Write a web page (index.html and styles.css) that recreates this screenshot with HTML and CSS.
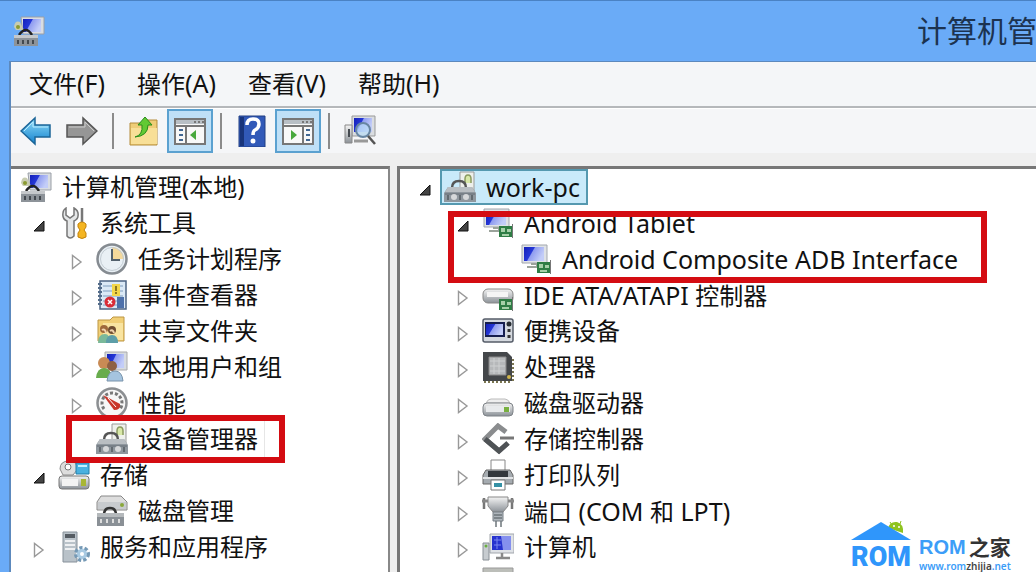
FILE: index.html
```html
<!DOCTYPE html>
<html lang="zh-CN">

<head>
    <meta charset="UTF-8">
    <meta name="viewport" content="width=device-width, initial-scale=1.0">
    <title>计算机管理</title>
    <link rel="stylesheet" href="styles.css">
</head>

<body>
    <!-- icons shared by several rows -->
    <svg class="defs" aria-hidden="true">
        <defs>
            <linearGradient id="screen" x1="0" y1="0" x2="1" y2="0.4">
                <stop offset="0" stop-color="#1420b8" />
                <stop offset="0.45" stop-color="#2638d8" />
                <stop offset="0.5" stop-color="#8f9cf0" />
                <stop offset="1" stop-color="#c3cdf8" />
            </linearGradient>
            <linearGradient id="metal" x1="0" y1="0" x2="0" y2="1">
                <stop offset="0" stop-color="#f4f4f4" />
                <stop offset="1" stop-color="#8c9298" />
            </linearGradient>
            <linearGradient id="blue" x1="0" y1="0" x2="0" y2="1">
                <stop offset="0" stop-color="#8fdcf8" />
                <stop offset="1" stop-color="#1583cf" />
            </linearGradient>
            <symbol id="open" viewBox="0 0 12 12">
                <path d="M11 1v10H1z" fill="#444" stroke="#111" />
            </symbol>
            <symbol id="closed" viewBox="0 0 12 16">
                <path d="M1.500 1.500v13L10 8z" fill="#fff" stroke="#999" stroke-width="1.400" />
            </symbol>
            <symbol id="manage" viewBox="0 0 32 32">
                <path d="M8 2h23v17H10z" fill="#d9dde2" stroke="#9a9fa6" />
                <path d="M10 4h18v13H10z" fill="url(#screen)" />
                <path d="M1 12q1-7 6-5l4 8H3z" fill="#c8ccb0" />
                <circle cx="5" cy="12" r="2" fill="#8a9a30" />
                <path d="M6 20q7-10 13 0" fill="none" stroke="#222" stroke-width="2.500" />
                <path d="M1 20h24v11H1z" fill="#8d9399" />
                <path d="M1 20h24v3H1z" fill="#c5c8cb" />
                <path d="M5 25v4M10 25v4M15 25v4M20 25v4" stroke="#444a50" stroke-width="2" />
            </symbol>
            <symbol id="toolbox" viewBox="0 0 32 32">
                <path d="M16 1h14v19H16z" fill="#eef0ec" stroke="#999" />
                <path d="M21 12V8q0-4 3-4t3 4v4" fill="#d8e8a8" stroke="#8a9a60" stroke-width="1.500" />
                <path d="M8 17q0-7 7-7t7 7" fill="none" stroke="#555" stroke-width="2.500" />
                <path d="M4 16h24l4 6v9H0v-9z" fill="#8f979e" />
                <path d="M4 16h24l3 5H1z" fill="#b9bec2" />
                <path d="M1 23h30" stroke="#606970" />
                <circle cx="10" cy="26" r="3" fill="#d6d8da" />
                <circle cx="22" cy="26" r="3" fill="#d6d8da" />
                <path d="M4 24v5M16 24v5M28 24v5" stroke="#626a70" stroke-width="2" />
            </symbol>
            <symbol id="adapter" viewBox="0 0 32 32">
                <path d="M2 2h25v18H2z" fill="#dfe2e6" stroke="#a2a7ad" />
                <path d="M4 4h20v14H4z" fill="url(#screen)" />
                <path d="M11 21h6v3H7" fill="none" stroke="#9ba39b" stroke-width="2" />
                <path d="M17 19h13v11H17z" fill="#2f7d45" />
                <path d="M19 21h4v4h-4zM25 22h4v3h-4zM20 27h7v2h-7z" fill="#a6d0a8" />
                <path d="M30.500 17v14" stroke="#777" />
            </symbol>
            <symbol id="drive" viewBox="0 0 32 32">
                <path d="M4 16q2-4 5-4h14q3 0 5 4z" fill="#eee" stroke="#bbb" />
                <rect x="1" y="16" width="30" height="13" rx="4" fill="url(#metal)" stroke="#7e8388" />
                <path d="M4 19h24v6H4z" fill="#e8eaec" />
                <path d="M22 20h5v5h-5z" fill="#78b040" />
            </symbol>
        </defs>
    </svg>

    <header class="titlebar">
        <svg class="app-icon" viewBox="0 0 32 32"><use href="#manage" /></svg>
        <h1>计算机管</h1>
    </header>

    <div class="window">
        <nav class="menubar">
            <button type="button">文件<span class="latin">(F)</span></button>
            <button type="button">操作<span class="latin">(A)</span></button>
            <button type="button">查看<span class="latin">(V)</span></button>
            <button type="button">帮助<span class="latin">(H)</span></button>
        </nav>

        <div class="toolbar">
            <button type="button" aria-label="后退">
                <svg class="icon" viewBox="0 0 32 32"><path d="M1 16L15 3v7h15v12H15v7z" fill="url(#blue)" stroke="#1b6598" stroke-width="1.500" /><path d="M4 16l9-9v5h15" fill="none" stroke="#b9ecff" /></svg>
            </button>
            <button type="button" aria-label="前进">
                <svg class="icon" viewBox="0 0 32 32"><path d="M31 16L17 3v7H1v12h16v7z" fill="#969696" stroke="#555" stroke-width="1.500" /><path d="M3 12h16V7l9 9" fill="none" stroke="#ccc" /></svg>
            </button>
            <span class="separator"></span>
            <button type="button" aria-label="上一级">
                <svg class="icon" viewBox="0 0 32 32"><path d="M2 8h12l3-3h12v25H2z" fill="#efcd77" stroke="#b48d3c" /><path d="M3 13h26v16H3z" fill="#f8df97" /><path d="M7 22q8-2 7-12h-4l7-8 7 8h-4q0 11-13 12z" fill="#62c934" stroke="#288c1c" /></svg>
            </button>
            <button type="button" class="pressed" aria-label="显示控制台树" aria-pressed="true">
                <svg class="icon" viewBox="0 0 32 32"><path d="M1 4h30v25H1z" fill="#f8f8f8" stroke="#777" stroke-width="2" /><path d="M2 5h28v4H2z" fill="#b8bfc5" /><path d="M20 7h2M24 7h2M28 7h2M2 11h28M12 12v17" stroke="#777" stroke-width="2" /><path d="M5 15h4M5 20h4M5 25h4" stroke="#426792" stroke-width="2" /><path d="M22 15v10l-6-5z" fill="#48a83c" /></svg>
            </button>
            <span class="separator"></span>
            <button type="button" aria-label="帮助">
                <svg class="icon" viewBox="0 0 32 32"><path d="M3 1h26v31H3z" fill="#3159b8" stroke="#203f82" /><path d="M4 2h4v29H4z" fill="#18347b" /><path d="M11 10q0-6 6-6t6 5q0 4-4 6-2 1-2 5" fill="none" stroke="#fff" stroke-width="3.500" /><circle cx="17" cy="26" r="2.500" fill="#fff" /></svg>
            </button>
            <button type="button" class="pressed" aria-label="显示操作窗格" aria-pressed="true">
                <svg class="icon" viewBox="0 0 32 32"><path d="M1 4h30v25H1z" fill="#f8f8f8" stroke="#777" stroke-width="2" /><path d="M2 5h28v4H2z" fill="#b8bfc5" /><path d="M20 7h2M24 7h2M28 7h2M2 11h28M21 12v17" stroke="#777" stroke-width="2" /><path d="M24 15h4M24 20h4M24 25h4" stroke="#426792" stroke-width="2" /><path d="M9 15v10l6-5z" fill="#48a83c" /></svg>
            </button>
            <span class="separator"></span>
            <button type="button" aria-label="扫描检测硬件改动">
                <svg class="icon" viewBox="0 0 32 32"><path d="M8 1h23v20H8z" fill="#dadde1" stroke="#999" /><path d="M10 3h18v14H10z" fill="url(#screen)" /><path d="M1 10h7v18H1z" fill="url(#metal)" stroke="#888" /><path d="M5 14v8" stroke="#454a50" stroke-width="2" /><path d="M10 26h14" stroke="#999" stroke-width="3" /><circle cx="19" cy="15" r="7" fill="#b8dcf7" fill-opacity="0.700" stroke="#6886a3" stroke-width="2" /><path d="M24 21l7 8" stroke="#555" stroke-width="2.500" /></svg>
            </button>
        </div>

        <main class="panes">
            <section class="pane pane-left">
                <ul class="tree">
                    <li>
                        <div class="row"><svg class="icon"><use href="#manage" /></svg><span>计算机管理(本地)</span></div>
                        <ul class="first-level">
                            <li>
                                <div class="row">
                                    <svg class="twisty"><use href="#open" /></svg>
                                    <svg class="icon" viewBox="0 0 32 32"><path d="M8 1v7l4 3 4-3V1q5 3 4 8 0 3-4 5v15q-4 4-7 0V14Q4 12 5 6q0-3 3-5z" fill="#e5e7e8" stroke="#777" stroke-width="1.500" /><path d="M24 1v14" stroke="#777" stroke-width="2.500" /><path d="M20 17q4-4 8 0v3l-2 3 2 3v4q-4 3-8 0v-4l2-3-2-3z" fill="#f4b522" stroke="#c3820a" /></svg>
                                    <span>系统工具</span>
                                </div>
                                <ul>
                                    <li>
                                        <div class="row">
                                            <svg class="twisty"><use href="#closed" /></svg>
                                            <svg class="icon" viewBox="0 0 32 32"><circle cx="16" cy="16" r="14.500" fill="#e9f0f5" stroke="#858b91" stroke-width="2.500" /><path d="M16 4a12 12 0 0 1 12 12H16z" fill="#f4d99b" /><circle cx="16" cy="16" r="11.500" fill="none" stroke="#c3ccd3" /><path d="M16 6v11h8" fill="none" stroke="#52606c" stroke-width="2" /></svg>
                                            <span>任务计划程序</span>
                                        </div>
                                    </li>
                                    <li>
                                        <div class="row">
                                            <svg class="twisty"><use href="#closed" /></svg>
                                            <svg class="icon" viewBox="0 0 32 32"><path d="M4 2h26v28H4z" fill="#dbe9f6" stroke="#4d6484" stroke-width="1.500" /><path d="M7 7h20M7 12h20M7 17h20M7 22h20M7 26h20" stroke="#7f9dbe" /><path d="M2 5h4M2 9h4M2 13h4M2 17h4M2 21h4M2 25h4" stroke="#526b89" stroke-width="2" /><path d="M16 5h8v12h-8z" fill="#f3d64a" /><path d="M20 7v5M20 13v2" stroke="#6a5615" stroke-width="1.500" /><circle cx="14" cy="23" r="5.500" fill="#d92c37" /><path d="M12 21l4 4M16 21l-4 4" stroke="#fff" stroke-width="1.500" /><path d="M21 18h7v11h-7z" fill="#4d70aa" /></svg>
                                            <span>事件查看器</span>
                                        </div>
                                    </li>
                                    <li>
                                        <div class="row">
                                            <svg class="twisty"><use href="#closed" /></svg>
                                            <svg class="icon" viewBox="0 0 32 32"><path d="M2 5h12l3-3h11v24H2z" fill="#f1cf76" stroke="#bd9643" /><path d="M7 8h20v17H7z" fill="#f9e4a1" /><circle cx="8" cy="14" r="4" fill="#9e683b" /><circle cx="16" cy="15" r="4" fill="#704d31" /><path d="M2 28q0-9 7-9 5 0 5 9z" fill="#7ab99a" /><path d="M10 28q0-8 6-8t6 8z" fill="#5d9ea8" /><path d="M6 15q3-2 4 3M14 16q3-2 4 2" fill="none" stroke="#f0d2ac" stroke-width="2" /></svg>
                                            <span>共享文件夹</span>
                                        </div>
                                    </li>
                                    <li>
                                        <div class="row">
                                            <svg class="twisty"><use href="#closed" /></svg>
                                            <svg class="icon" viewBox="0 0 32 32"><path d="M9 1h22v18H9z" fill="#d7dbe0" stroke="#aaa" /><path d="M11 3h17v14H11z" fill="url(#screen)" /><circle cx="8" cy="12" r="6" fill="#c88b55" /><circle cx="16" cy="15" r="5" fill="#8e6043" /><path d="M0 27q1-10 8-10t8 10z" fill="#68ac4d" /><path d="M11 30q1-10 8-10t8 10z" fill="#a5c4df" stroke="#7893aa" /></svg>
                                            <span>本地用户和组</span>
                                        </div>
                                    </li>
                                    <li>
                                        <div class="row">
                                            <svg class="twisty"><use href="#closed" /></svg>
                                            <svg class="icon" viewBox="0 0 32 32"><circle cx="16" cy="16" r="14.500" fill="#f6f6f6" stroke="#8c8f92" stroke-width="2.500" /><path d="M8 22A10 10 0 1 1 24 22" fill="none" stroke="#777" stroke-width="3" stroke-dasharray="3 2" /><path d="M7 8l11 15q7 0 6-6z" fill="#c9362a" /><path d="M12 11l8 9" stroke="#fff" /></svg>
                                            <span>性能</span>
                                        </div>
                                    </li>
                                    <li class="marked">
                                        <div class="row">
                                            <span class="twisty"></span>
                                            <svg class="icon"><use href="#toolbox" /></svg>
                                            <span class="focused">设备管理器</span>
                                        </div>
                                        <div class="mark"></div>
                                    </li>
                                </ul>
                            </li>
                            <li>
                                <div class="row">
                                    <svg class="twisty"><use href="#open" /></svg>
                                    <svg class="icon" viewBox="0 0 32 32"><path d="M2 10q0-8 9-8t8 9l-4 5H5z" fill="#ddd" stroke="#8b8b8b" /><circle cx="10" cy="8" r="3" fill="#fff" stroke="#777" /><path d="M18 4h13v11H18z" fill="#4ab1df" stroke="#257ea8" /><path d="M20 7h9" stroke="#c3efff" stroke-width="2" /><rect x="1" y="17" width="30" height="13" rx="3" fill="url(#metal)" stroke="#777" /><path d="M4 20h16v7H4z" fill="#f3f3f3" /><path d="M23 20h5v7h-5z" fill="#a8b635" /></svg>
                                    <span>存储</span>
                                </div>
                                <ul>
                                    <li>
                                        <div class="row">
                                            <span class="twisty"></span>
                                            <svg class="icon" viewBox="0 0 32 32"><path d="M5 1h20l6 6v8H1V7z" fill="#ddd" stroke="#888" /><path d="M2 7h28v7H2z" fill="#c8cbce" /><circle cx="26" cy="10" r="2" fill="#89a83a" /><path d="M8 20q0-7 6-7t6 7" fill="none" stroke="#333" stroke-width="2.500" /><path d="M1 18h27v13H1z" fill="#8a9096" /><path d="M1 18h27v4H1z" fill="#b5b9bc" /><path d="M5 24v4M11 24v4M17 24v4M23 24v4" stroke="#ddd" stroke-width="2" /></svg>
                                            <span>磁盘管理</span>
                                        </div>
                                    </li>
                                </ul>
                            </li>
                            <li>
                                <div class="row">
                                    <svg class="twisty"><use href="#closed" /></svg>
                                    <svg class="icon" viewBox="0 0 32 32"><path d="M5 1h14v30H5z" fill="#b9c2c9" stroke="#87919a" /><path d="M7 3h10v4H7z" fill="#555c63" /><path d="M7 10h10M7 14h10M7 18h10" stroke="#eef0f2" stroke-width="2" /><circle cx="24" cy="23" r="6" fill="#e7f2fa" stroke="#7599b5" stroke-width="4" stroke-dasharray="3 2" /><circle cx="24" cy="23" r="5" fill="#a9cae2" /><circle cx="24" cy="23" r="2" fill="#fff" /></svg>
                                    <span>服务和应用程序</span>
                                </div>
                            </li>
                        </ul>
                    </li>
                </ul>
            </section>

            <section class="pane pane-right">
                <ul class="tree">
                    <li>
                        <div class="row">
                            <svg class="twisty"><use href="#open" /></svg>
                            <div class="selected"><svg class="icon"><use href="#toolbox" /></svg><span class="latin">work-pc</span></div>
                        </div>
                        <ul>
                            <li class="marked">
                                <div class="row"><svg class="twisty"><use href="#open" /></svg><svg class="icon"><use href="#adapter" /></svg><span class="latin">Android Tablet</span></div>
                                <ul>
                                    <li>
                                        <div class="row"><span class="twisty"></span><svg class="icon"><use href="#adapter" /></svg><span class="latin">Android Composite ADB Interface</span></div>
                                    </li>
                                </ul>
                                <div class="mark mark-wide"></div>
                            </li>
                            <li>
                                <div class="row">
                                    <svg class="twisty"><use href="#closed" /></svg>
                                    <svg class="icon" viewBox="0 0 32 32"><rect x="1" y="10" width="30" height="14" rx="5" fill="url(#metal)" stroke="#888" /><path d="M5 13h21v5H5z" fill="#f5f5f5" /><path d="M17 20h13v11H17z" fill="#2f7d45" /><path d="M19 22h4v4h-4zM25 23h4v3h-4zM20 28h7v2h-7z" fill="#a6d0a8" /><path d="M30.500 18v14" stroke="#777" /></svg>
                                    <span><span class="latin">IDE ATA/ATAPI </span>控制器</span>
                                </div>
                            </li>
                            <li>
                                <div class="row">
                                    <svg class="twisty"><use href="#closed" /></svg>
                                    <svg class="icon" viewBox="0 0 32 32"><rect x="1" y="4" width="30" height="23" rx="2" fill="#d5d9df" stroke="#555c68" stroke-width="1.500" /><path d="M3 7h20v15H3z" fill="#161e4e" /><path d="M4 9h17v11H4z" fill="url(#screen)" /><circle cx="27" cy="9" r="2.500" fill="#272c32" /><path d="M27 14v3M27 20v3" stroke="#333" stroke-width="3" /></svg>
                                    <span>便携设备</span>
                                </div>
                            </li>
                            <li>
                                <div class="row">
                                    <svg class="twisty"><use href="#closed" /></svg>
                                    <svg class="icon" viewBox="0 0 32 32"><path d="M1 1h24l5 5v24H1z" fill="#44474a" /><path d="M31 8v23M2 31h28" stroke="#7b7651" stroke-width="2" stroke-dasharray="2 2" /><path d="M7 6h17v18H7z" fill="#b6b8ba" stroke="#898989" /><path d="M8 10h15M8 15h15M8 20h15M12 7v16M17 7v16" stroke="#ced0d1" /><circle cx="27" cy="26" r="2" fill="#d1b64c" /></svg>
                                    <span>处理器</span>
                                </div>
                            </li>
                            <li>
                                <div class="row"><svg class="twisty"><use href="#closed" /></svg><svg class="icon"><use href="#drive" /></svg><span>磁盘驱动器</span></div>
                            </li>
                            <li>
                                <div class="row">
                                    <svg class="twisty"><use href="#closed" /></svg>
                                    <svg class="icon" viewBox="0 0 32 32"><path d="M24 9l-8-6L3 16l14 12 9-8" fill="none" stroke="#8a8c8e" stroke-width="5" /><path d="M3 16l14 12 9-8" fill="none" stroke="#4f5356" stroke-width="5" /><path d="M18 15h14" stroke="#777" stroke-width="3" /></svg>
                                    <span>存储控制器</span>
                                </div>
                            </li>
                            <li>
                                <div class="row">
                                    <svg class="twisty"><use href="#closed" /></svg>
                                    <svg class="icon" viewBox="0 0 32 32"><path d="M9 1h14v13H9z" fill="#fff" stroke="#888" /><path d="M4 11h24l3 5v9H1v-9z" fill="#a5abb0" stroke="#666" /><path d="M6 12h20v7H6z" fill="#33383d" /><path d="M1 19h30" stroke="#e1e3e5" stroke-width="2" /><path d="M9 21h14v10H9z" fill="#fff" stroke="#777" /><path d="M12 24h8v4h-8z" fill="#3691a5" /></svg>
                                    <span>打印队列</span>
                                </div>
                            </li>
                            <li>
                                <div class="row">
                                    <svg class="twisty"><use href="#closed" /></svg>
                                    <svg class="icon" viewBox="0 0 32 32"><path d="M2 3v11M30 3v11" stroke="#777" stroke-width="2.500" /><path d="M0 6h7M25 6h7" stroke="#888" stroke-width="3" /><path d="M6 2h20v9l-5 6H11L6 11z" fill="url(#metal)" stroke="#888" /><path d="M11 17h10v9H11z" fill="#aeb5bb" stroke="#788087" /><path d="M12 20h8M12 23h8M14 26v6M19 26v6" stroke="#6d757b" stroke-width="1.500" /></svg>
                                    <span>端口<span class="latin"> (COM </span>和<span class="latin"> LPT)</span></span>
                                </div>
                            </li>
                            <li>
                                <div class="row">
                                    <svg class="twisty"><use href="#closed" /></svg>
                                    <svg class="icon" viewBox="0 0 32 32"><path d="M8 3h24v19H8z" fill="#dfe2e6" stroke="#a2a7ad" /><path d="M10 5h19v14H10z" fill="#2733cf" /><path d="M19 5h10v14h-8z" fill="#8590ee" /><path d="M12 9h7M12 14h7M15 6v12" stroke="#7b87f0" /><path d="M20 22v4M14 27h14" stroke="#888" stroke-width="2.500" /><path d="M1 12h6v17H1z" fill="#c7ccd0" stroke="#899096" /><circle cx="4" cy="15" r="1.500" fill="#67af3d" /></svg>
                                    <span>计算机</span>
                                </div>
                            </li>
                            <li>
                                <div class="row"><span class="twisty"></span><svg class="icon" viewBox="0 0 32 32"><path d="M1 1h30v28H1z" fill="#bcbeb9" stroke="#999" /></svg></div>
                            </li>
                        </ul>
                    </li>
                </ul>
            </section>
        </main>
    </div>

    <div class="brand">
        <div class="brand-mark">
            <svg class="roof" viewBox="0 0 62 24"><path d="M38 10q2-7 9-6 7 2 6 11z" fill="#8fc320" /><path d="M40 4l2 3M51 3l-1 3" stroke="#8fc320" /><circle cx="44" cy="8" r="1" fill="#fff" /><circle cx="49" cy="9" r="1" fill="#fff" /><path d="M1 22L31 4l30 18z" fill="#2f96fb" /></svg>
            <strong>ROM</strong>
        </div>
        <div class="brand-text">
            <p class="brand-name"><b>ROM</b>之家</p>
            <p class="brand-url">www.rom<span>zhijia</span>.net</p>
        </div>
    </div>
</body>

</html>
```
FILE: styles.css
```css
* {
    box-sizing: border-box;
}

body {
    margin: 0;
    height: 100vh;
    display: flex;
    flex-direction: column;
    overflow: hidden;
    background-color: #6aabf7;
    border-top: 1px solid #4a82c4;
    color: #111;
    font-family: "Noto Sans", "Noto Sans CJK SC", sans-serif;
    font-size: 24px;
    line-height: 36px;
}

ul,
p,
h1 {
    margin: 0;
    padding: 0;
    list-style: none;
}

button {
    border: none;
    background: none;
    padding: 0;
    color: inherit;
    font: inherit;
}

.defs {
    position: absolute;
    width: 0;
    height: 0;
}

.latin {
    font-size: 25px;
    white-space: pre;
}

.titlebar {
    display: flex;
    align-items: center;
    justify-content: space-between;
    flex: none;
    height: 60px;
    padding-left: 13px;
    overflow: hidden;
}

.titlebar h1 {
    width: 119px;
    white-space: nowrap;
    font-size: 30px;
    font-weight: normal;
    color: #1c3350;
}

.icon,
.app-icon {
    width: 32px;
    height: 32px;
    flex: none;
}

.window {
    flex: 1;
    min-height: 0;
    display: flex;
    flex-direction: column;
    margin-left: 9px;
    border-top: 1px solid #5c89bd;
    border-left: 2px solid #5c89bd;
    background-color: #efefef;
}

.menubar {
    display: flex;
    flex: none;
    height: 46px;
    padding-left: 2px;
    padding-bottom: 2px;
    background-color: #f4f6f8;
    border-bottom: 2px solid #b5b8bb;
}

.menubar button {
    padding: 0 16px;
}

.toolbar {
    display: flex;
    align-items: center;
    flex: none;
    height: 45px;
    padding-left: 9px;
    gap: 14px;
    background-color: #f5f6f8;
    border-top: 1px solid #fff;
}

.toolbar button {
    display: flex;
    align-items: center;
    justify-content: center;
}

.toolbar .pressed {
    width: 46px;
    height: 44px;
    margin: 0 -7px;
    background-color: #bfe0f7;
    border: 2px solid #5ba1d0;
}

.separator {
    width: 2px;
    height: 36px;
    background-color: #8b8b8b;
}

.panes {
    flex: 1;
    min-height: 0;
    display: flex;
    gap: 7px;
    margin-top: 13px;
}

.pane {
    border-top: 3px solid #777;
    background-color: #fff;
    overflow: hidden;
}

.pane-left {
    width: 379px;
    flex: none;
    padding-left: 9px;
    border-right: 2px solid #888;
}

.pane-right {
    flex: 1;
    padding-left: 19px;
    border-left: 3px solid #777;
}

.tree ul {
    padding-left: 38px;
}

.tree .first-level {
    padding-left: 13px;
}

.row {
    display: flex;
    align-items: center;
    height: 36px;
    white-space: nowrap;
}

.row .icon {
    margin-right: 10px;
}

.twisty {
    width: 12px;
    height: 16px;
    flex: none;
    margin-top: 6px;
    margin-right: 13px;
}

.focused {
    border-right: 1px solid #e6e6e6;
    padding-right: 6px;
}

.selected {
    display: flex;
    align-items: center;
    height: 36px;
    margin-left: -4px;
    padding: 0 6px 0 2px;
    background-color: #c9eafa;
    border: 2px solid #5599b0;
}

.marked {
    position: relative;
}

.mark {
    position: absolute;
    top: -6px;
    bottom: -6px;
    left: -5px;
    width: 219px;
    border: 6px solid #d40c12;
}

.mark-wide {
    top: 6px;
    left: -9px;
    width: 539px;
}

.brand {
    position: absolute;
    right: 23px;
    bottom: 0;
    display: flex;
    align-items: flex-end;
    gap: 7px;
}

.brand-mark {
    display: flex;
    flex-direction: column;
    align-items: center;
    color: #2f96fb;
}

.roof {
    width: 62px;
    height: 24px;
}

.brand-mark strong {
    font-family: Roboto, "Liberation Sans", sans-serif;
    font-size: 27px;
    font-weight: 900;
    line-height: 30px;
}

.brand-text {
    width: 94px;
}

.brand-name {
    display: flex;
    gap: 3px;
    white-space: nowrap;
    font-size: 21px;
    font-weight: bold;
    line-height: 26px;
    color: #333;
}

.brand-name b {
    color: #3c9df8;
    font-family: "Liberation Sans", sans-serif;
    font-size: 20px;
}

.brand-url {
    font-size: 10px;
    font-weight: 600;
    line-height: 12px;
    color: #3c9df8;
}

.brand-url span {
    color: #444;
}
```
